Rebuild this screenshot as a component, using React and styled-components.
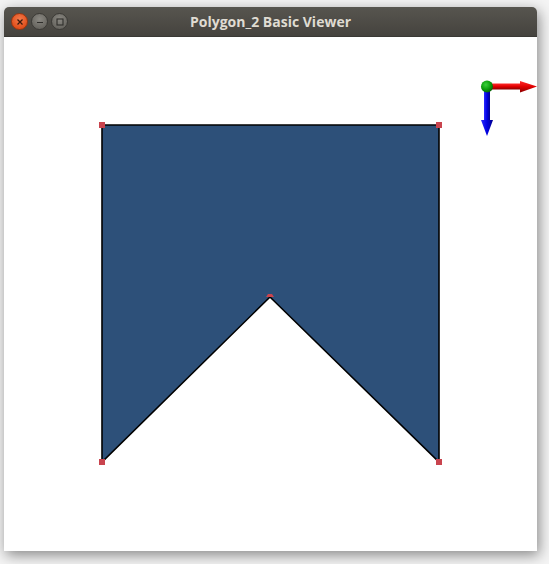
import React from "react";
import styled, { createGlobalStyle } from "styled-components";

const GlobalStyle = createGlobalStyle`
  html, body {
    margin: 0;
    padding: 0;
    background: #f4f4f4;
    width: 549px;
    height: 564px;
    overflow: hidden;
  }
`;

const Screen = styled.div`
  width: 549px;
  height: 564px;
  padding: 7px 0 0 4px;
  box-sizing: border-box;
`;

const Window = styled.div`
  width: 533px;
  height: 544px;
  display: flex;
  flex-direction: column;
  border-radius: 5px 5px 0 0;
  box-shadow: 2px 4px 14px rgba(0, 0, 0, 0.45);
  overflow: hidden;
`;

const TitleBar = styled.div`
  height: 29px;
  flex: none;
  display: flex;
  align-items: center;
  position: relative;
  padding-left: 7px;
  gap: 3px;
  background: linear-gradient(#57554f, #45433e);
  border-bottom: 1px solid #3a3935;
`;

const Title = styled.div`
  position: absolute;
  left: 0;
  right: 0;
  text-align: center;
  font-family: "Open Sans", "DejaVu Sans", sans-serif;
  font-weight: 700;
  font-size: 14px;
  color: #dfdbd2;
  pointer-events: none;
`;

const WinButton = styled.div`
  width: 17px;
  height: 17px;
  border-radius: 50%;
  box-sizing: border-box;
  border: 1px solid ${(p) => (p.$close ? "#9a3510" : "#3b3a36")};
  background: ${(p) =>
    p.$close
      ? "radial-gradient(circle at 50% 35%, #f47a4c, #e0501c 70%)"
      : "radial-gradient(circle at 50% 35%, #8a8882, #67655f 75%)"};
  display: flex;
  align-items: center;
  justify-content: center;
  position: relative;
  z-index: 1;
`;

const Canvas = styled.div`
  flex: 1;
  background: #ffffff;
  position: relative;
`;

const CloseGlyph = () => (
  <svg width="8" height="8" viewBox="0 0 8 8">
    <path d="M1.5 1.5 L6.5 6.5 M6.5 1.5 L1.5 6.5" stroke="#3a1a0c" strokeWidth="1.3" />
  </svg>
);

const MinGlyph = () => (
  <svg width="8" height="8" viewBox="0 0 8 8">
    <path d="M1 4.5 H7" stroke="#2f2e2b" strokeWidth="1.2" />
  </svg>
);

const MaxGlyph = () => (
  <svg width="8" height="8" viewBox="0 0 8 8">
    <rect x="1" y="1" width="6" height="6" fill="none" stroke="#2f2e2b" strokeWidth="1.1" />
  </svg>
);

const points = [
  [102, 125],
  [439, 125],
  [439, 462],
  [270, 297],
  [102, 462],
];

// scene coords are page coords; canvas starts at (4, 37)
const OX = 4;
const OY = 37;

const Scene = () => (
  <svg width="533" height="515" viewBox={`${OX} ${OY} 533 515`}>
    <defs>
      <linearGradient id="red" x1="0" y1="0" x2="0" y2="1">
        <stop offset="0" stopColor="#ff2a2a" />
        <stop offset="0.5" stopColor="#e00000" />
        <stop offset="1" stopColor="#8a0000" />
      </linearGradient>
      <linearGradient id="blue" x1="0" y1="0" x2="1" y2="0">
        <stop offset="0" stopColor="#2a2aff" />
        <stop offset="0.5" stopColor="#0000e0" />
        <stop offset="1" stopColor="#00008a" />
      </linearGradient>
      <radialGradient id="green" cx="0.4" cy="0.35" r="0.7">
        <stop offset="0" stopColor="#3ad23a" />
        <stop offset="0.6" stopColor="#0a9a0a" />
        <stop offset="1" stopColor="#055a05" />
      </radialGradient>
    </defs>
    <polygon
      points={points.map((p) => p.join(",")).join(" ")}
      fill="#2d5079"
      stroke="#000"
      strokeWidth="1.6"
    />
    {points
      .filter(([, y]) => y !== 297)
      .map(([x, y], i) => (
        <rect key={i} x={x - 3} y={y - 3} width="6" height="6" fill="#c9444e" />
      ))}
    {/* apex marker, only its upper part shows */}
    <polygon points="266,297 268,294 272,294 274,297" fill="#c9444e" />
    {/* axes widget */}
    <rect x="487" y="83.5" width="34" height="6" fill="url(#red)" />
    <polygon points="520,81 537,86.5 520,92.5" fill="url(#red)" />
    <rect x="484" y="87" width="6" height="34" fill="url(#blue)" />
    <polygon points="481,120 487,136 493,120" fill="url(#blue)" />
    <circle cx="487" cy="86.5" r="6" fill="url(#green)" />
  </svg>
);

export default function App() {
  return (
    <>
      <GlobalStyle />
      <Screen>
        <Window>
          <TitleBar>
            <WinButton $close>
              <CloseGlyph />
            </WinButton>
            <WinButton>
              <MinGlyph />
            </WinButton>
            <WinButton>
              <MaxGlyph />
            </WinButton>
            <Title>Polygon_2 Basic Viewer</Title>
          </TitleBar>
          <Canvas>
            <Scene />
          </Canvas>
        </Window>
      </Screen>
    </>
  );
}
